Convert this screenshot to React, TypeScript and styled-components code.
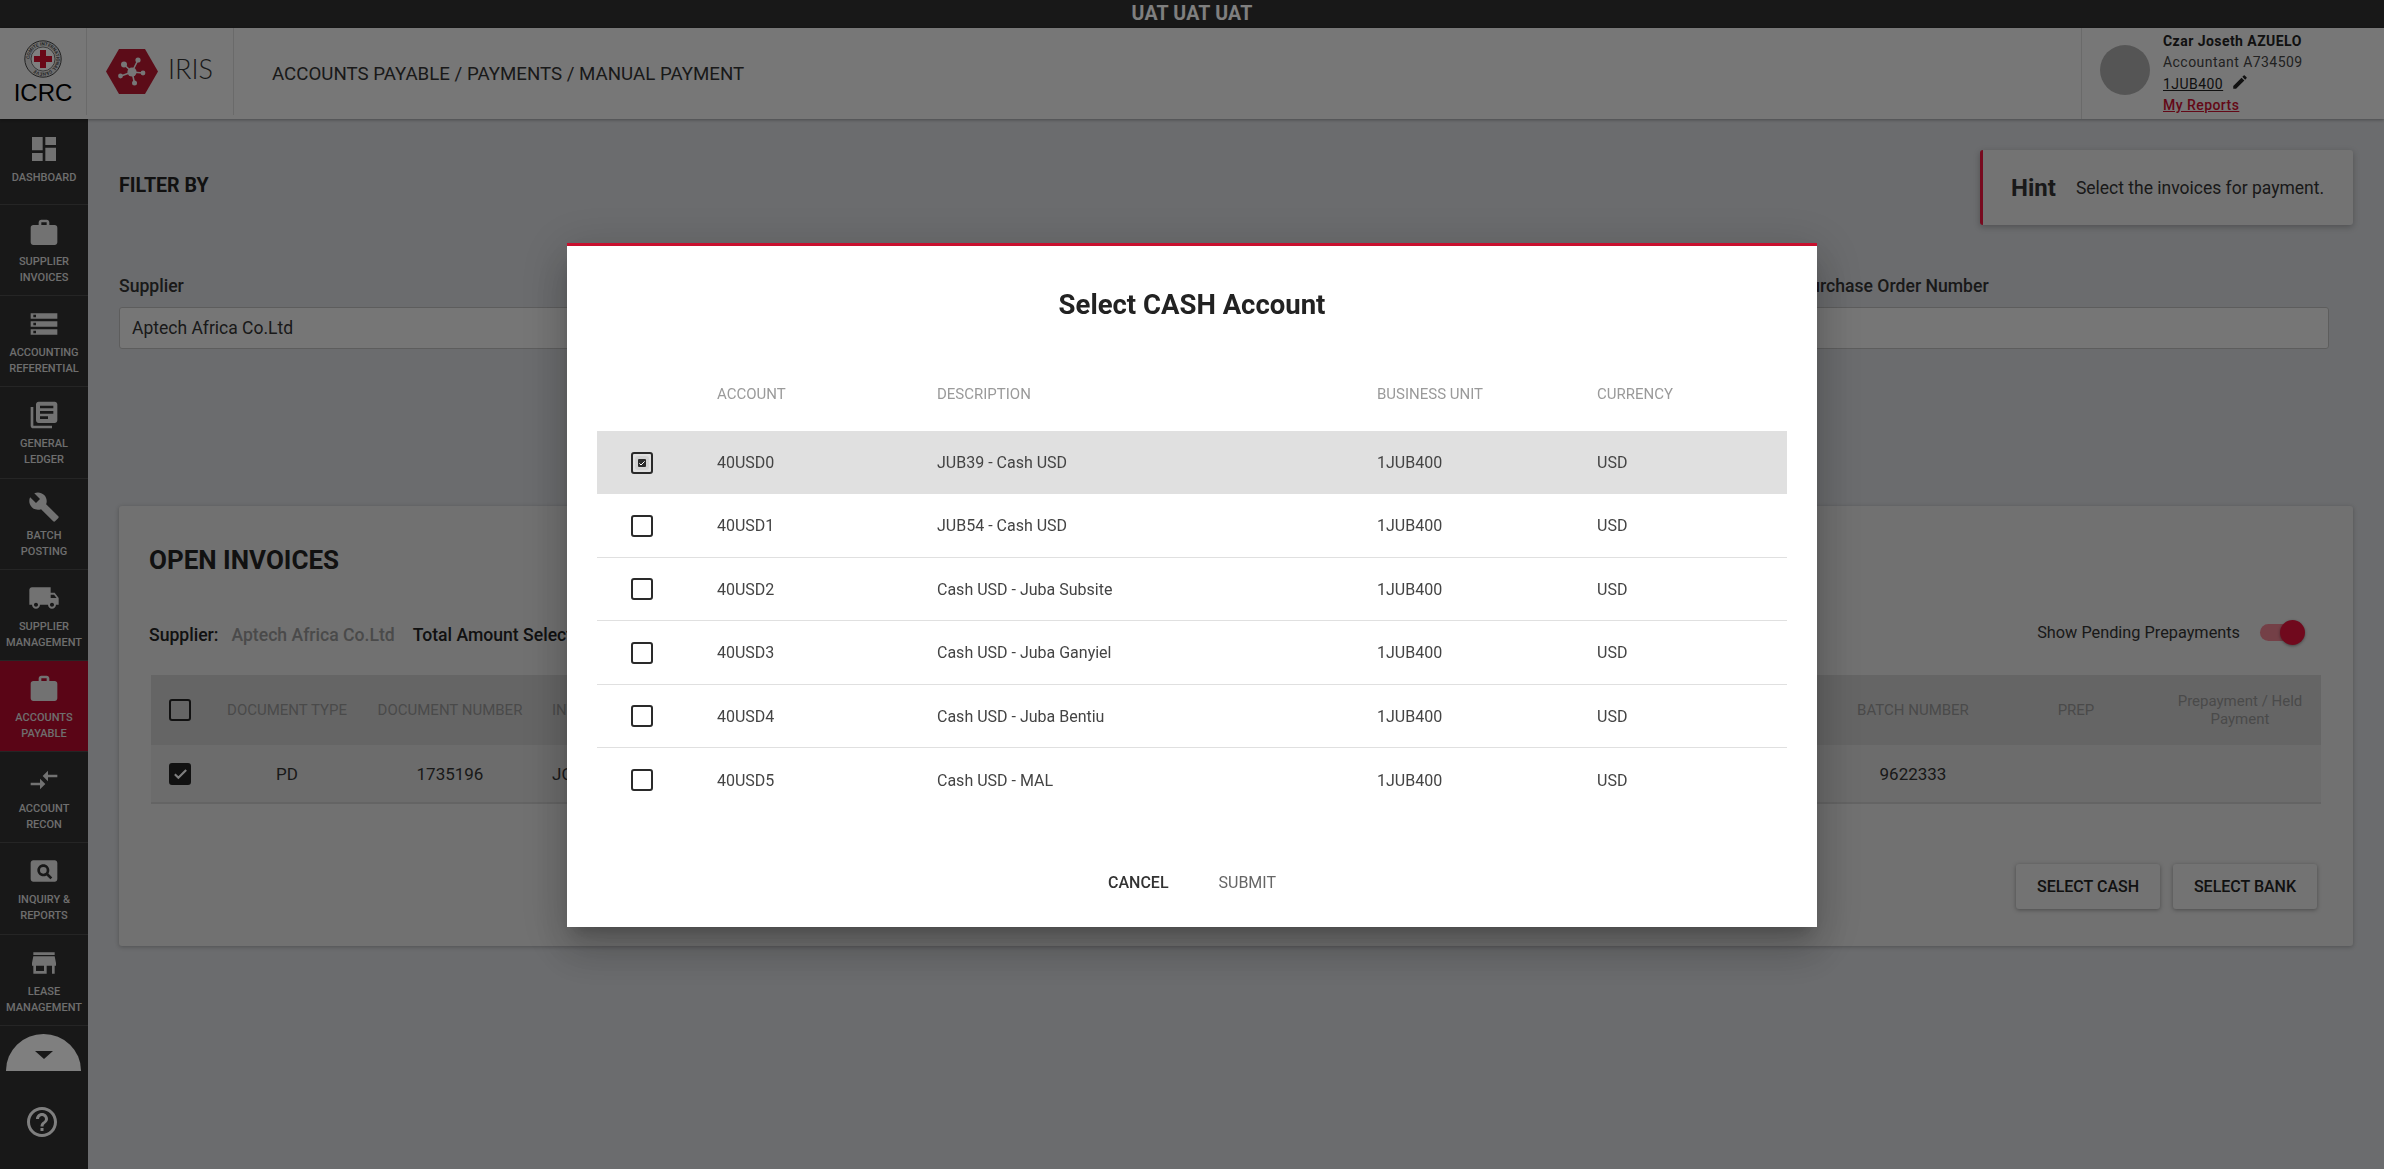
import React from "react";
import styled, { createGlobalStyle } from "styled-components";
import {
  MdDashboard, MdWork, MdStorage, MdLibraryBooks, MdBuild, MdLocalShipping,
  MdCompareArrows, MdPageview, MdStore, MdHelpOutline, MdEdit,
} from "react-icons/md";

const Global = createGlobalStyle`
  html, body { margin: 0; height: 100%; overflow: hidden; }
  body { font-family: Roboto, "Liberation Sans", sans-serif; color: #222; background: #d6d8dc; }
  * { box-sizing: border-box; }
`;

const Page = styled.div`
  width: 2384px; height: 1169px; display: flex; flex-direction: column; overflow: hidden; position: relative;
`;
const Banner = styled.div`
  height: 28px; flex: none; background: #303030; color: #fff; font-size: 19.5px; font-weight: 700; padding-bottom: 2px;
  display: flex; align-items: center; justify-content: center; letter-spacing: .2px;
`;
const Header = styled.header`
  height: 91px; flex: none; background: #eee; display: flex; box-shadow: 0 1px 3px rgba(0,0,0,.3); position: relative; z-index: 2;
`;
const LogoCell = styled.div`
  width: 87px; height: 87px; border-right: 1px solid #d4d4d4; display: flex; flex-direction: column; align-items: center; padding-top: 12px;
`;
const IcrcText = styled.div`
  font-family: "Liberation Sans", sans-serif; font-size: 24px; line-height: 24px; color: #000; margin-top: 3px;
`;
const IrisCell = styled.div`
  width: 147px; height: 87px; border-right: 1px solid #d4d4d4; display: flex; align-items: center; padding-left: 19px; gap: 10px;
`;
const IrisText = styled.div`
  font-family: Lato, sans-serif; font-weight: 300; font-size: 27px; color: #333; margin-top: -6px;
`;
const Crumb = styled.div`
  padding-left: 38px; font-size: 18.7px; color: #333; display: flex; align-items: center; height: 91px;
`;
const User = styled.div`
  margin-left: auto; width: 303px; height: 91px; border-left: 1px solid #d4d4d4; display: flex; align-items: center; padding-left: 18px; gap: 13px;
`;
const Avatar = styled.div`
  width: 50px; height: 50px; border-radius: 50%; background: #aaa; flex: none; margin-top: -8px;
`;
const UserText = styled.div`
  display: flex; flex-direction: column; font-size: 14px; letter-spacing: .45px; margin-top: -1px;
`;
const UserName = styled.div`
  font-weight: 700; line-height: 21px; color: #222;
`;
const UserLine = styled.div`
  line-height: 21px; color: #444; font-weight: 400;
`;
const UnitLine = styled.div`
  line-height: 23px; color: #222; display: flex; align-items: center; gap: 8px;
  & > span { text-decoration: underline; }
  & > svg { margin-top: -5px; }
`;
const ReportLink = styled.a`
  line-height: 19px; color: #c8102e; text-decoration: underline; font-weight: 500;
`;

const Body = styled.div`
  flex: 1; display: flex; min-height: 0;
`;
const Side = styled.nav`
  width: 88px; flex: none; background: #303030; display: flex; flex-direction: column;
`;
const SideItem = styled.div<{ $active?: boolean }>`
  height: 91.2px; flex: none; padding-top: 13px; display: flex; flex-direction: column; align-items: center;
  background: ${(p) => (p.$active ? "#b40a2c" : "transparent")};
  border-bottom: 1px solid #4a4a4a;
  color: #fff; text-align: center;
  &:first-child { height: 86px; padding-top: 15px; }
`;
const SideIcon = styled.div`
  height: 30px; display: flex; align-items: center; justify-content: center; margin-bottom: 6px; color: #e4e4e4;
`;
const SideLabel = styled.div`
  font-size: 11px; line-height: 16px; font-weight: 500; text-transform: uppercase; white-space: pre-line;
  color: #dcdcdc;
`;
const MoreTab = styled.div`
  width: 75px; height: 37px; margin: 8px 0 0 6px; background: #fff; border-radius: 38px 38px 0 0 / 37px 37px 0 0;
  display: flex; justify-content: center; padding-top: 17px;
  &::after { content: ""; width: 0; height: 0; border-left: 9px solid transparent; border-right: 9px solid transparent; border-top: 8px solid #303030; }
`;
const Help = styled.div`
  margin-top: 33px; display: flex; justify-content: center; color: #fff; padding-right: 4px;
`;

const Main = styled.main`
  flex: 1; padding: 31px 31px 0; min-width: 0;
`;
const TopRow = styled.div`
  display: flex; justify-content: space-between; align-items: center;
`;
const FilterTitle = styled.h2`
  margin: -4px 0 0; font-size: 19.6px; line-height: 24px; font-weight: 700; color: #222;
`;
const Hint = styled.div`
  width: 373px; height: 75px; background: #e6e6e6; border-left: 3px solid #f0143e; border-radius: 3px;
  box-shadow: 0 2px 6px rgba(0,0,0,.25); display: flex; align-items: center; padding-left: 28px; gap: 20px;
`;
const HintTitle = styled.div`
  font-size: 24px; font-weight: 700; color: #333;
`;
const HintText = styled.div`
  font-size: 17.5px; color: #333;
`;
const Filters = styled.div`
  display: flex; justify-content: space-between; margin: 51px 24px 0 0;
`;
const Field = styled.div<{ $w: number }>`
  width: ${(p) => p.$w}px;
`;
const FieldLabel = styled.label`
  display: block; font-size: 17.6px; line-height: 20px; font-weight: 500; color: #333; margin-bottom: 11px; white-space: nowrap;
`;
const FieldBox = styled.div`
  height: 42px; border: 1px solid #bbb; border-radius: 3px; background: #ededed; font-size: 17.5px; color: #333;
  display: flex; align-items: center; padding-left: 12px;
`;
const Card = styled.section`
  margin-top: 157px; height: 440px; background: #e2e2e2; border-radius: 3px; box-shadow: 0 1px 4px rgba(0,0,0,.25);
  padding: 40px 32px 0 30px;
`;
const CardTitle = styled.h2`
  margin: 0; font-size: 26px; line-height: 28px; font-weight: 700; color: #222;
`;
const Summary = styled.div`
  margin-top: 49px; height: 24px; display: flex; align-items: center; font-size: 17.6px; font-weight: 500;
`;
const SumLabel = styled.span`
  color: #222; margin-right: 13px;
`;
const SumValue = styled.span`
  color: #949494; margin-right: 18px;
`;
const ToggleWrap = styled.div`
  margin: -6px 21px 0 auto; display: flex; align-items: center; gap: 20px; font-weight: 400; font-size: 16.3px; color: #333;
`;
const Track = styled.div`
  width: 40px; height: 17px; border-radius: 9px; background: #e8808f; position: relative;
`;
const Knob = styled.div`
  width: 25px; height: 25px; border-radius: 50%; background: #e0123a; position: absolute; right: -5px; top: -4px;
  box-shadow: 0 1px 3px rgba(0,0,0,.4);
`;
const InvGrid = styled.div<{ $head?: boolean }>`
  margin-left: 2px; display: grid; grid-template-columns: 62px 148px 178px 1fr 160px 166px 162px;
  align-items: center; text-align: center;
  height: ${(p) => (p.$head ? 70 : 59)}px;
  background: ${(p) => (p.$head ? "#cbcbcb" : "#d8d8d8")};
  border-bottom: ${(p) => (p.$head ? "none" : "2px solid #c8c8c8")};
  margin-top: ${(p) => (p.$head ? "28px" : "0")};
  font-size: ${(p) => (p.$head ? 15 : 17)}px;
  color: ${(p) => (p.$head ? "#949494" : "#333")};
`;
const MidCell = styled.div`
  text-align: left; padding-left: 13px; white-space: nowrap; overflow: hidden;
`;
const Square = styled.div<{ $on?: boolean }>`
  width: 22px; height: 22px; margin-left: 18px; border-radius: 3px; border: 2.5px solid #222;
  background: ${(p) => (p.$on ? "#222" : "transparent")};
  display: flex; align-items: center; justify-content: center; color: #fff;
`;
const Buttons = styled.div`
  display: flex; justify-content: flex-end; gap: 13px; margin: 60px 4px 0 0;
`;
const RaisedBtn = styled.button`
  width: 144px; height: 45px; border: none; border-radius: 3px; background: #e6e6e6; font: 500 16px Roboto, sans-serif; color: #222;
  box-shadow: 0 1px 4px rgba(0,0,0,.35);
`;

const Scrim = styled.div`
  position: fixed; inset: 0; background: rgba(0,0,0,.5); display: flex; align-items: center; justify-content: center; z-index: 10;
`;
const Dialog = styled.div`
  width: 1250px; height: 684px; background: #fff; border-top: 3px solid #c8102e; padding: 42px 30px 0;
  box-shadow: 0 11px 15px -7px rgba(0,0,0,.2), 0 24px 38px 3px rgba(0,0,0,.14), 0 9px 46px 8px rgba(0,0,0,.12);
`;
const DialogTitle = styled.h2`
  margin: 0; text-align: center; font-size: 27.5px; line-height: 34px; font-weight: 700; color: #222;
`;
const AccountRow = styled.div<{ $kind?: "head" | "on" | "last" }>`
  display: grid; grid-template-columns: 120px 220px 440px 220px 190px; align-items: center;
  height: ${(p) => (p.$kind === "head" ? "75.4px" : "63.5px")};
  padding-top: ${(p) => (p.$kind === "head" ? "2px" : "0")};
  margin-top: ${(p) => (p.$kind === "head" ? "34px" : "0")};
  background: ${(p) => (p.$kind === "on" ? "#e0e0e0" : "transparent")};
  border-bottom: ${(p) => (p.$kind ? "none" : "1px solid #e0e0e0")};
  font-size: ${(p) => (p.$kind === "head" ? 15 : 16)}px;
  color: ${(p) => (p.$kind === "head" ? "#9a9a9a" : "#444")};
`;
const Radio = styled.div`
  width: 22px; height: 22px; margin-left: 34px; border: 2.5px solid #2a2a2a; border-radius: 3px;
  display: flex; align-items: center; justify-content: center;
`;
const RadioDot = styled.div`
  width: 14px; height: 14px; background: #d2d2d2; border-radius: 3px; display: flex; align-items: center; justify-content: center;
  & > span { width: 8px; height: 8px; background: #2a2a2a; border-radius: 1px; display: flex; color: #fff; }
`;
const DialogFoot = styled.div`
  display: flex; justify-content: center; gap: 34px; margin-top: 53px;
`;
const TextBtn = styled.button<{ $muted?: boolean }>`
  height: 36px; padding: 0 8px; border: none; background: none; font: ${(p) => (p.$muted ? 400 : 500)} 16px Roboto, sans-serif;
  color: ${(p) => (p.$muted ? "#666" : "#333")};
`;

const Check = ({ s }: { s: number }) => (
  <svg width={s} height={s} viewBox="0 0 24 24" fill="none" stroke="currentColor" strokeWidth="3">
    <path d="M4 13l5 5L20 7" />
  </svg>
);

const Emblem = () => (
  <svg width="38" height="38" viewBox="0 0 38 38">
    <defs>
      <path id="ring" d="M19 19m-13.4 0a13.4 13.4 0 1 1 26.8 0a13.4 13.4 0 1 1 -26.8 0" />
    </defs>
    <circle cx="19" cy="19" r="18.2" fill="#ddd" stroke="#444" strokeWidth="1" />
    <text fontSize="4.6" fontFamily="Roboto, sans-serif" fill="#333" fontWeight="500">
      <textPath href="#ring">COMITE INTERNATIONAL GENEVE</textPath>
    </text>
    <circle cx="19" cy="19" r="12" fill="#fff" stroke="#555" strokeWidth=".8" />
    <path d="M16 10h6v6h6v6h-6v6h-6v-6h-6v-6h6z" fill="#d2102e" />
  </svg>
);

const IrisHex = () => (
  <svg width="52" height="45" viewBox="0 0 52 45">
    <path d="M13 0h26l13 22.5L39 45H13L0 22.5z" fill="#b81830" />
    <g stroke="#eee" strokeWidth="1.6">
      <path d="M26 23L18 15.5M26 23L32 11M26 23L37 24M26 23L15 27M26 23L28.5 34" />
    </g>
    <g fill="#eee">
      <circle cx="26" cy="23" r="4.6" />
      <circle cx="18" cy="15.5" r="3" />
      <circle cx="32" cy="11" r="2.6" />
      <circle cx="37" cy="24" r="2.4" />
      <circle cx="14.5" cy="27" r="2.4" />
      <circle cx="28.5" cy="34" r="2.5" />
    </g>
  </svg>
);

const NAV: { icon: React.ReactNode; label: string; active?: boolean }[] = [
  { icon: <MdDashboard size={32} />, label: "Dashboard" },
  { icon: <MdWork size={32} />, label: "Supplier\nInvoices" },
  { icon: <MdStorage size={32} />, label: "Accounting\nReferential" },
  { icon: <MdLibraryBooks size={32} />, label: "General\nLedger" },
  { icon: <MdBuild size={32} />, label: "Batch\nPosting" },
  { icon: <MdLocalShipping size={32} />, label: "Supplier\nManagement" },
  { icon: <MdWork size={32} />, label: "Accounts\nPayable", active: true },
  { icon: <MdCompareArrows size={32} />, label: "Account\nRecon" },
  { icon: <MdPageview size={32} />, label: "Inquiry &\nReports" },
  { icon: <MdStore size={32} />, label: "Lease\nManagement" },
];

const ACCOUNTS = [
  ["40USD0", "JUB39 - Cash USD"],
  ["40USD1", "JUB54 - Cash USD"],
  ["40USD2", "Cash USD - Juba Subsite"],
  ["40USD3", "Cash USD - Juba Ganyiel"],
  ["40USD4", "Cash USD - Juba Bentiu"],
  ["40USD5", "Cash USD - MAL"],
];

export default function App() {
  return (
    <Page>
      <Global />
      <Banner>UAT UAT UAT</Banner>
      <Header>
        <LogoCell>
          <Emblem />
          <IcrcText>ICRC</IcrcText>
        </LogoCell>
        <IrisCell>
          <IrisHex />
          <IrisText>IRIS</IrisText>
        </IrisCell>
        <Crumb>ACCOUNTS PAYABLE / PAYMENTS / MANUAL PAYMENT</Crumb>
        <User>
          <Avatar />
          <UserText>
            <UserName>Czar Joseth AZUELO</UserName>
            <UserLine>Accountant A734509</UserLine>
            <UnitLine>
              <span>1JUB400</span>
              <MdEdit size={18} />
            </UnitLine>
            <ReportLink>My Reports</ReportLink>
          </UserText>
        </User>
      </Header>
      <Body>
        <Side>
          {NAV.map((n) => (
            <SideItem key={n.label} $active={n.active}>
              <SideIcon>{n.icon}</SideIcon>
              <SideLabel>{n.label}</SideLabel>
            </SideItem>
          ))}
          <MoreTab />
          <Help>
            <MdHelpOutline size={36} />
          </Help>
        </Side>
        <Main>
          <TopRow>
            <FilterTitle>FILTER BY</FilterTitle>
            <Hint>
              <HintTitle>Hint</HintTitle>
              <HintText>Select the invoices for payment.</HintText>
            </Hint>
          </TopRow>
          <Filters>
            <Field $w={700}>
              <FieldLabel>Supplier</FieldLabel>
              <FieldBox>Aptech Africa Co.Ltd</FieldBox>
            </Field>
            <Field $w={530}>
              <FieldLabel>Purchase Order Number</FieldLabel>
              <FieldBox />
            </Field>
          </Filters>
          <Card>
            <CardTitle>OPEN INVOICES</CardTitle>
            <Summary>
              <SumLabel>Supplier:</SumLabel>
              <SumValue>Aptech Africa Co.Ltd</SumValue>
              <SumLabel>Total Amount Selected:</SumLabel>
              <ToggleWrap>
                Show Pending Prepayments
                <Track>
                  <Knob />
                </Track>
              </ToggleWrap>
            </Summary>
            <InvGrid $head>
              <Square />
              <div>DOCUMENT TYPE</div>
              <div>DOCUMENT NUMBER</div>
              <MidCell>INVOICE NUMBER</MidCell>
              <div>BATCH NUMBER</div>
              <div>PREP</div>
              <div>Prepayment / Held Payment</div>
            </InvGrid>
            <InvGrid>
              <Square $on>
                <Check s={17} />
              </Square>
              <div>PD</div>
              <div>1735196</div>
              <MidCell>JO</MidCell>
              <div>9622333</div>
              <div />
              <div />
            </InvGrid>
            <Buttons>
              <RaisedBtn>SELECT CASH</RaisedBtn>
              <RaisedBtn>SELECT BANK</RaisedBtn>
            </Buttons>
          </Card>
        </Main>
      </Body>
      <Scrim>
        <Dialog>
          <DialogTitle>Select CASH Account</DialogTitle>
          <AccountRow $kind="head">
            <div />
            <div>ACCOUNT</div>
            <div>DESCRIPTION</div>
            <div>BUSINESS UNIT</div>
            <div>CURRENCY</div>
          </AccountRow>
          {ACCOUNTS.map(([a, d], i) => (
            <AccountRow key={a} $kind={i === 0 ? "on" : i === ACCOUNTS.length - 1 ? "last" : undefined}>
              <Radio>
                {i === 0 && (
                  <RadioDot>
                    <span>
                      <Check s={8} />
                    </span>
                  </RadioDot>
                )}
              </Radio>
              <div>{a}</div>
              <div>{d}</div>
              <div>1JUB400</div>
              <div>USD</div>
            </AccountRow>
          ))}
          <DialogFoot>
            <TextBtn>CANCEL</TextBtn>
            <TextBtn $muted>SUBMIT</TextBtn>
          </DialogFoot>
        </Dialog>
      </Scrim>
    </Page>
  );
}
